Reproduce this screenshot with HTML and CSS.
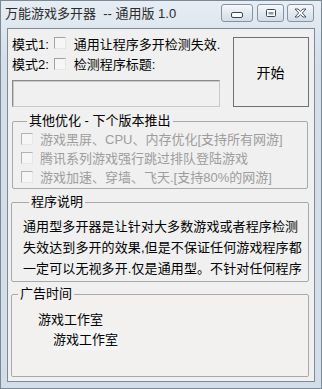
FILE: index.html
```html
<!DOCTYPE html>
<html lang="zh-CN">
<head>
    <meta charset="UTF-8">
    <title>万能游戏多开器</title>
    <meta name="viewport" content="width=device-width, initial-scale=1.0">
    <link rel="stylesheet" href="styles.css">
</head>
<body>
<div class="window">
    <div class="titlebar">
        <span class="title">万能游戏多开器  -- 通用版 1.0</span>
        <div class="caption-btns">
            <div class="cap-btn min">
                <svg width="12" height="6" viewBox="0 0 12 6"><rect x="0.5" y="0.5" width="11" height="5" rx="1.5" fill="#fff" stroke="#3b4652"/></svg>
            </div>
            <div class="cap-btn max">
                <svg width="10" height="8" viewBox="0 0 10 8"><rect x="0.5" y="0.5" width="9" height="7" rx="1" fill="#fff" stroke="#3b4652"/><rect x="2.5" y="3" width="5" height="2.5" fill="#8e9aa8"/></svg>
            </div>
            <div class="cap-btn close">
                <svg width="13" height="10" viewBox="0 0 13 10"><path d="M1 1 L4 1 L6.5 3.3 L9 1 L12 1 L8.3 5 L12 9 L9 9 L6.5 6.7 L4 9 L1 9 L4.7 5 Z" fill="#fff" stroke="#3b4652" stroke-width="0.9" stroke-linejoin="round"/></svg>
            </div>
        </div>
    </div>

    <div class="client">
        <div class="top">
            <div class="modes">
                <div class="mode-row one">
                    <span>模式1:</span><span class="chk"></span><span>通用让程序多开检测失效.</span>
                </div>
                <div class="mode-row two">
                    <span>模式2:</span><span class="chk"></span><span>检测程序标题:</span>
                </div>
                <div class="title-input"></div>
            </div>
            <div class="start-btn">开始</div>
        </div>

        <fieldset class="group other">
            <legend>其他优化 - 下个版本推出</legend>
            <div class="opt"><span class="chk off"></span>游戏黑屏、CPU、内存优化[支持所有网游]</div>
            <div class="opt"><span class="chk off"></span>腾讯系列游戏强行跳过排队登陆游戏</div>
            <div class="opt"><span class="chk off"></span>游戏加速、穿墙、飞天.[支持80%的网游]</div>
        </fieldset>

        <fieldset class="group about">
            <legend>程序说明</legend>
            <p class="desc">通用型多开器是让针对大多数游戏或者程序检测<br>失效达到多开的效果,但是不保证任何游戏程序都<br>一定可以无视多开.仅是通用型。不针对任何程序</p>
        </fieldset>

        <fieldset class="group ads">
            <legend>广告时间</legend>
            <div class="ad first">游戏工作室</div>
            <div class="ad second">游戏工作室</div>
        </fieldset>
    </div>
</div>
</body>
</html>
```

FILE: styles.css
```css
body {
    margin: 0;
    font-family: "Liberation Sans", "Noto Sans CJK SC", sans-serif;
    font-size: 13px;
    color: #000;
}
.window {
    width: 322px;
    height: 389px;
    box-sizing: border-box;
    border: 1px solid #7b8896;
    background: linear-gradient(#e6edf4, #d5dfe9 60px, #d3dde8);
    display: flex;
    flex-direction: column;
}
.titlebar {
    height: 27px;
    display: flex;
    justify-content: space-between;
    padding: 0 7px 0 4px;
}
.title {
    white-space: pre;
    color: #2b2b2b;
    line-height: 26px;
}
.caption-btns {
    display: flex;
    margin-top: 3px;
}
.cap-btn {
    height: 18px;
    width: 27px;
    box-sizing: border-box;
    border: 1px solid #8593a3;
    border-radius: 3px;
    background: linear-gradient(#f6f8fb, #e2e9f0 50%, #d4dde7);
    display: flex;
    align-items: center;
    justify-content: center;
}
.cap-btn.min {
    width: 32px;
    margin-right: 4px;
    align-items: flex-end;
    padding-bottom: 3px;
}
.cap-btn.max {
    margin-right: 3px;
}
.client {
    flex: 1;
    margin: 0 6px 6px;
    border: 1px solid #7d8a97;
    background: #f0f0f0;
    padding: 0 5px 0 3px;
}
.top {
    display: flex;
    padding-top: 4px;
}
.modes {
    width: 208px;
    padding-left: 1px;
    flex: none;
}
.mode-row {
    display: flex;
    align-items: center;
    height: 20px;
    white-space: nowrap;
}
.mode-row.two {
    height: 21px;
}
.mode-row .chk {
    margin: 0 8px 0 5px;
}
.chk {
    display: inline-block;
    width: 12px;
    height: 12px;
    box-sizing: border-box;
    border-top: 1px solid #a2a2a2;
    border-left: 1px solid #a2a2a2;
    border-right: 1px solid #e6e6e6;
    border-bottom: 1px solid #e6e6e6;
    background: #f6f6f6;
    flex: none;
}
.chk.off {
    border-top-color: #b3b3b3;
    border-left-color: #b3b3b3;
    margin-right: 7px;
}
.title-input {
    margin-top: 6px;
    height: 27px;
    box-sizing: border-box;
    border: 1px solid #c8c8c8;
    border-top-color: #8a8a8a;
    border-left-color: #8a8a8a;
    box-shadow: inset 1px 1px 0 #c9c9c9;
    background: #f0f0f0;
}
.start-btn {
    margin: 4px 0 0 auto;
    width: 76px;
    height: 70px;
    box-sizing: border-box;
    border: 1px solid #707070;
    background: #f0f0f0;
    display: flex;
    align-items: center;
    justify-content: center;
    font-size: 14px;
    padding-right: 1px;
}
.group {
    margin: 0;
    padding: 0;
    border: 1px solid #a9a9a9;
    border-radius: 2px;
    min-width: 0;
}
.group legend {
    padding: 0 2px;
    margin-left: 6px;
    line-height: 16px;
}
.group.other {
    margin: 6px 1px 0 1px;
    padding: 0 0 2px 8px;
}
.opt {
    height: 19px;
    display: flex;
    align-items: center;
    color: #9d9d9d;
}
.group.about {
    margin-top: 5px;
    padding: 6px 0 2px 11px;
}
.desc {
    margin: 0;
    line-height: 21px;
    letter-spacing: 0.1px;
    white-space: nowrap;
}
.group.ads {
    margin-top: 4px;
    height: 91px;
    box-sizing: border-box;
    background: #f2f1ef;
    padding: 8px 0 0 0;
}
.ad {
    line-height: 20px;
    width: max-content;
}
.ad.first {
    margin-left: 26px;
}
.ad.second {
    margin-left: 41px;
    background: #f6f6f8;
}
```
